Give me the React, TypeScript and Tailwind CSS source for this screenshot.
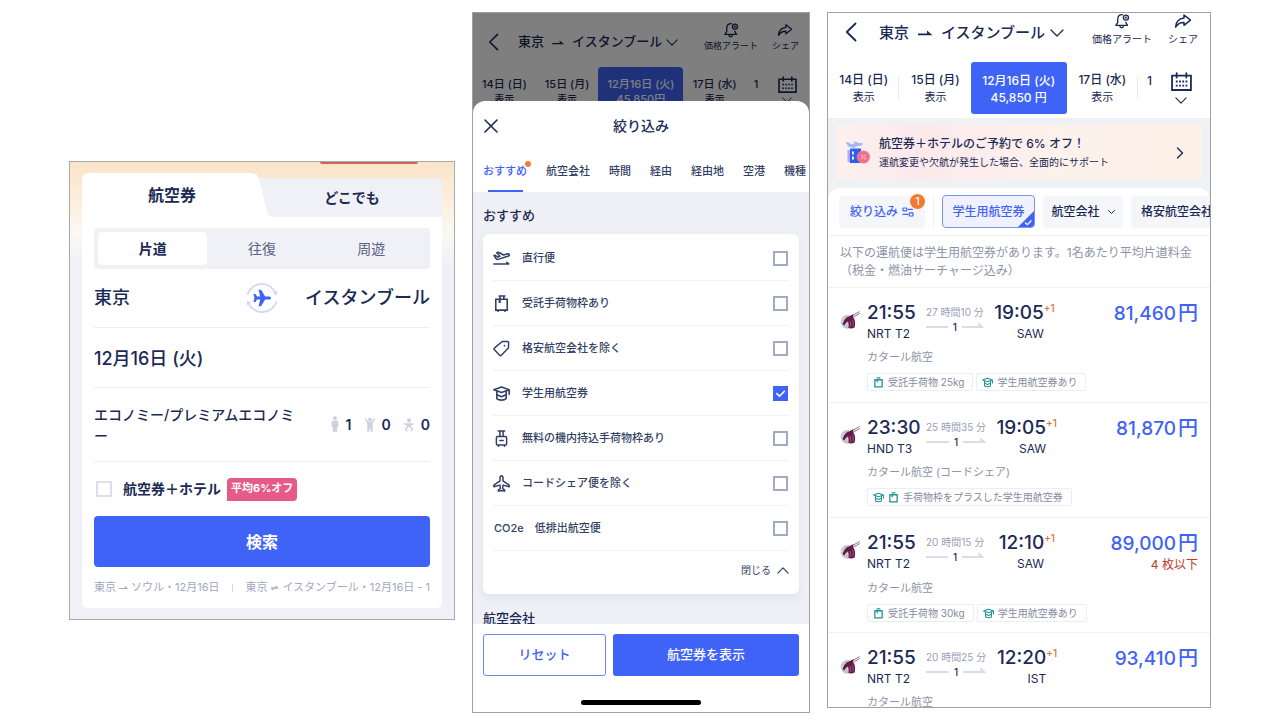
import React, { useState } from "react";

type IconProps = { className?: string };

const stroke = {
  fill: "none",
  stroke: "currentColor",
  strokeLinecap: "round" as const,
  strokeLinejoin: "round" as const,
  "aria-hidden": true,
};

function BackIcon({ className }: IconProps) {
  return (
    <svg viewBox="0 0 12 20" className={className} {...stroke} strokeWidth="1.8">
      <path d="M10.5 1.5 1.8 10l8.7 8.5" />
    </svg>
  );
}

function ChevronDown({ className }: IconProps) {
  return (
    <svg viewBox="0 0 14 8" className={className} {...stroke} strokeWidth="1.3">
      <path d="M1 1l6 6 6-6" />
    </svg>
  );
}

function ChevronUp({ className }: IconProps) {
  return (
    <svg viewBox="0 0 14 8" className={className} {...stroke} strokeWidth="1.4">
      <path d="M1 7l6-6 6 6" />
    </svg>
  );
}

function ChevronRight({ className }: IconProps) {
  return (
    <svg viewBox="0 0 8 12" className={className} {...stroke} strokeWidth="1.4">
      <path d="M1.5 1l5 5-5 5" />
    </svg>
  );
}

function HalfArrow({ className }: IconProps) {
  return (
    <svg viewBox="0 0 14 6" className={className} fill="currentColor" aria-hidden="true">
      <path d="M0 3.600h9V.6l5 4.200v.4H0z" />
    </svg>
  );
}

function RoundTripArrow({ className }: IconProps) {
  return (
    <svg viewBox="0 0 12 8" className={className} fill="currentColor" aria-hidden="true">
      <path d="M1.500 2.600h6V.4L11.500 3.600h-10zM10.500 5.400h-6v2.200L.5 4.400h10z" />
    </svg>
  );
}

function BellIcon({ className }: IconProps) {
  return (
    <svg viewBox="0 0 18 18" className={className} {...stroke} strokeWidth="1.500">
      <path d="M9.400 1.900C6 1.900 4.200 4.100 4.200 7v3.800L2 13.900h13.200l-1.800-3.100V10.200" />
      <path d="M6.500 14.300c.2 1.600 1.100 2.300 2.100 2.300s1.900-.7 2.100-2.300" />
      <circle cx="13.400" cy="5.200" r="2.900" />
      <path d="M13.400 4.200v2M12.400 5.200h2" strokeWidth="1" />
    </svg>
  );
}

function ShareIcon({ className }: IconProps) {
  return (
    <svg viewBox="0 0 18 16" className={className} {...stroke} strokeWidth="1.500">
      <path d="M10 2l6.500 5.200L10 12.300V9.400C6.400 9.200 3.700 10.700 1.600 14c.4-4.700 3.200-8.300 8.400-8.900z" />
    </svg>
  );
}

function CalendarIcon({ className }: IconProps) {
  return (
    <svg viewBox="0 0 20 18" className={className} {...stroke} strokeWidth="1.700" strokeLinejoin="miter">
      <path d="M1 3.400h18v13.700H1zM5.400 1v4.200M14.600 1v4.200" />
      <path d="M4.600 9h1.700M7.700 9h1.700M10.800 9h1.700M13.900 9h1.700M4.600 13h1.700M7.700 13h1.700M10.800 13h1.700M13.900 13h1.700" strokeLinecap="butt" />
    </svg>
  );
}

function CloseIcon({ className }: IconProps) {
  return (
    <svg viewBox="0 0 14 14" className={className} {...stroke} strokeWidth="1.600">
      <path d="M1 1l12 12M13 1L1 13" />
    </svg>
  );
}

function TakeoffIcon({ className }: IconProps) {
  return (
    <svg viewBox="0 0 16 16" className={className} {...stroke} strokeWidth="1.400">
      <path d="M.8 13.200h14M12.800 11.600l2 1.500" />
      <path d="M1 5.200l1.200-.3 2 1.700 2.300-.7-3-3.300 1.500-.5 5 2.600 3-.9c1.100-.3 2.200 0 2.400.6.200.6-.5 1.200-1.500 1.500L4.600 8.800c-.7.2-1.200 0-1.600-.5z" />
    </svg>
  );
}

function SuitcaseIcon({ className }: IconProps) {
  return (
    <svg viewBox="0 0 16 16" className={className} {...stroke} strokeWidth="1.500" strokeLinejoin="miter">
      <path d="M2.600 4h10.800v10.200H2.600zM4.700 14.500v1M11.300 14.500v1M5.800 1h5.400M6.500 1v3M10.200 1v3" />
      <path d="M6.300 4v3.600" strokeWidth="2" strokeLinecap="butt" />
    </svg>
  );
}

function BagTagIcon({ className }: IconProps) {
  return (
    <svg viewBox="0 0 12 12" className={className} {...stroke} strokeWidth="1.400" strokeLinejoin="round">
      <path d="M2 3h8v7.800H2zM4 .9h4M4.600 3v2.800" strokeLinecap="butt" />
    </svg>
  );
}

function TagIcon({ className }: IconProps) {
  return (
    <svg viewBox="0 0 16 16" className={className} {...stroke} strokeWidth="1.400">
      <path d="M8.600 1.400h5.200c.6 0 .9.400.9.900l-.2 5.300-6.900 6.900c-.4.400-.9.400-1.200 0L1.200 9c-.3-.4-.3-.9.100-1.300z" />
      <circle cx="10.800" cy="5.300" r=".8" fill="currentColor" stroke="none" />
    </svg>
  );
}

function StudentIcon({ className }: IconProps) {
  return (
    <svg viewBox="0 0 16 16" className={className} {...stroke} strokeWidth="1.500">
      <path d="M8 1.800L.8 4.400 8 7l7.200-2.600zM15.200 4.400v4.400" />
      <path d="M3.600 6.200v6.600c1 1 2.600 1.400 4.400 1.400s3.400-.4 4.400-1.400V6.200" />
      <path d="M3.800 9.200L8 11l4.200-1.800" />
    </svg>
  );
}

function CarryOnIcon({ className }: IconProps) {
  return (
    <svg viewBox="0 0 16 16" className={className} {...stroke} strokeWidth="1.400">
      <path d="M5 .9h6M6.500 1v5M9.500 1v5" />
      <rect x="3.200" y="6.200" width="9.600" height="8" rx="1" />
      <path d="M6.400 9.900h3.200M5.200 14.600v.8M10.800 14.600v.8" />
    </svg>
  );
}

function PlaneIcon({ className }: IconProps) {
  return (
    <svg viewBox="0 0 16 16" className={className} {...stroke} strokeWidth="1.400">
      <path d="M8 .8c-.9 0-1.400 1-1.400 2v2.800L.8 9.500v1.600l5.800-1.600.3 3.200-1.900 1.500v1L8 14.500l3 .7v-1l-1.900-1.500.3-3.200 5.800 1.600V9.500L9.400 5.600V2.800c0-1-.5-2-1.400-2z" />
    </svg>
  );
}

function FilterIcon({ className }: IconProps) {
  return (
    <svg viewBox="0 0 12 10" className={className} {...stroke} strokeWidth="1.200">
      <rect x="1" y="1" width="3.800" height="2.800" rx=".6" />
      <path d="M6.400 2.400h4M1 7.400h4.600" />
      <rect x="7.200" y="5.800" width="3.800" height="3.200" rx=".6" />
    </svg>
  );
}

function AdultIcon({ className }: IconProps) {
  return (
    <svg viewBox="0 0 10 18" className={className} fill="currentColor" aria-hidden="true">
      <circle cx="5" cy="2.400" r="2.200" />
      <path d="M3 5h4c1 0 1.600.6 1.600 1.500V11c0 .6-.9.800-1.300.3V16c0 1.300-1.900 1.500-2.100.2h-.4C4.600 17.500 2.700 17.300 2.700 16v-4.700c-.4.500-1.300.3-1.300-.3V6.500C1.400 5.600 2 5 3 5z" />
    </svg>
  );
}

function ChildIcon({ className }: IconProps) {
  return (
    <svg viewBox="0 0 12 18" className={className} fill="currentColor" aria-hidden="true">
      <circle cx="6" cy="4" r="2.200" />
      <path d="M1 2.600c.4-.4 1-.2 1.300.3L4 6.400h4l1.700-3.500c.3-.5.900-.7 1.300-.3.300.3.300.7.100 1.100L8.900 8.300V16c0 1.200-2 1.300-2.200.1l-.4-3.300h-.6l-.4 3.300c-.2 1.200-2.200 1.100-2.200-.1V8.300L.9 3.700C.7 3.300.7 2.900 1 2.600z" />
    </svg>
  );
}

function InfantIcon({ className }: IconProps) {
  return (
    <svg viewBox="0 0 12 14" className={className} fill="currentColor" aria-hidden="true">
      <circle cx="6" cy="2.400" r="2.100" />
      <path d="M1.300 5.200c.9-.2 2 .1 3.100.1h3.200c1.100 0 2.200-.3 3.100-.1.800.3.700 1.200 0 1.400l-2.500.7v2H3.800v-2l-2.500-.7c-.7-.2-.8-1.100 0-1.400z" />
      <path d="M4 9.600l-1.600 1.200 1.700 1.900M8 9.600l1.600 1.200-1.700 1.900" fill="none" stroke="currentColor" strokeWidth="1.500" strokeLinecap="round" strokeLinejoin="round" />
    </svg>
  );
}

function SwapIcon({ className }: IconProps) {
  return (
    <svg viewBox="0 0 32 32" className={className} aria-hidden="true">
      <path d="M1.500 12.500A15 15 0 0 1 29.800 11.500M30.500 19.500A15 15 0 0 1 2.200 20.500" fill="none" stroke="#cfd8fc" strokeWidth="1.700" />
      <path d="M31.200 8.500l-.4 5-4.200-2.300zM.8 23.500l.4-5 4.200 2.300z" fill="#cfd8fc" />
      <path
        d="M25 16c0 1-.8 1.600-1.800 1.600h-4L15 24.300h-2.400l1.600-6.700H11l-1.500 2.300H7.500l.9-3.900-.9-3.900h2l1.500 2.300h3.200L12.600 7.700H15l4.200 6.700h4c1 0 1.800.6 1.800 1.600z"
        fill="#3f63f7"
      />
    </svg>
  );
}

function AirlineLogo({ className }: IconProps) {
  return (
    <svg viewBox="0 0 20 18" className={className} aria-hidden="true">
      <circle cx="7.500" cy="10.800" r="6.900" fill="#c1c4ca" />
      <path d="M1.500 8h8M.8 10.500h8M1.300 13h8" stroke="#dfe0e3" strokeWidth=".8" />
      <path d="M19.600.6L9.500 6.200M19.800 2.400l-7.300 4.400" fill="none" stroke="#9c6a83" strokeWidth="1" />
      <path d="M2.600 13.600C3.300 9.800 5.600 6.200 9 5.400l4.500-2.300-.6 3.300c1.600 1.300 2.300 3.400 2.200 6.200l-.3 3.600c-2 1.400-4.300 1.600-6.400.6.500-2.400.4-4.400-.5-6.200C6.300 11.300 5.300 12.600 4.600 14.200z" fill="#641a45" />
      <path d="M9.800 10c.8 1.800.9 3.800.4 6M12.600 8.800c.7 2 .8 4.200.2 6.600" stroke="#b98aa4" strokeWidth=".6" fill="none" />
    </svg>
  );
}

function BannerArt({ className }: IconProps) {
  return (
    <svg viewBox="0 0 26 24" className={className} aria-hidden="true">
      <path d="M5 7.500h11V22H5z" fill="#3558ee" />
      <path d="M2.500 9H5v12.500l-2.500-1z" fill="#9db4f8" />
      <path d="M7 10.500h1.800v3H7zM7 15.500h1.800v3H7z" fill="#fff" />
      <path d="M.8 1.500l2.200-.4 2.800 2L10 2.500 8.300.6 10 .4l4.500 1.800c1.800-.3 3.300 0 3.500.8.100.8-1.200 1.500-3 1.800L11 5.500 7 8.300l-1.500.1 2-2.500-3.500.3z" fill="#a3b9f6" />
      <circle cx="18.500" cy="16" r="6.300" fill="#f0708a" stroke="#f493a6" strokeWidth="1" strokeDasharray="1.800 1" />
      <path d="M16.600 18.200l3.900-4.400" stroke="#fbc3cd" strokeWidth="1" />
      <circle cx="16.900" cy="14.600" r=".9" fill="#fbc3cd" />
      <circle cx="20.200" cy="17.500" r=".9" fill="#fbc3cd" />
    </svg>
  );
}

/* ---------- Search panel ---------- */

function SearchPanel() {
  const [bundle, setBundle] = useState(false);
  return (
    <section className="mt-[149px] self-start overflow-hidden border border-[#a9a9a9] bg-[#f0f1f6] bg-[linear-gradient(180deg,#fbe4c8_0px,#fdf0e0_45px,#fbf8f5_70px,#f0f1f6_104px)] pb-[11px]">
      <div className="flex h-[11px] justify-end pr-9">
        <div className="h-[2px] w-[98px] rounded-b-full bg-[#c96a55]" />
      </div>
      <div className="mx-3">
        <div className="flex items-end">
          <button className="h-11 flex-1 rounded-tl-md bg-white pl-3 text-base font-bold">航空券</button>
          <svg viewBox="0 0 24 44" className="h-11 w-6" aria-hidden="true">
            <path d="M6 5h18v39H6z" fill="#f0f1f6" />
            <path d="M0 0c5 0 8 2 9.200 6.500l7.800 32c1 3.800 3 5.500 7 5.500H0z" fill="#fff" />
          </svg>
          <button className="h-[39px] flex-1 rounded-tr-md bg-[#f0f1f6] pr-3 text-sm font-bold">どこでも</button>
        </div>
        <div className="rounded-b-md bg-white px-3 pt-[11px]">
          <div className="flex h-[41px] rounded bg-[#f0f1f6] p-1 text-sm text-[#5a6385]">
            <button className="flex-1 rounded-sm bg-white font-bold text-[#1b2a55]">片道</button>
            <button className="flex-1">往復</button>
            <button className="flex-1">周遊</button>
          </div>
          <div className="flex h-[59px] items-center justify-between border-b border-[#ececf1] text-lg font-medium">
            <button className="flex-1 text-left">東京</button>
            <button aria-label="出発地と到着地を入れ替える">
              <SwapIcon className="size-8" />
            </button>
            <button className="flex-1 text-right">イスタンブール</button>
          </div>
          <button className="flex h-[60px] w-full items-center border-b border-[#ececf1] pt-0.5 text-lg font-medium">
            12月16日 (火)
          </button>
          <div className="flex h-[74px] items-center justify-between border-b border-[#ececf1]">
            <button className="w-[205px] text-left text-sm leading-[21px] font-medium [line-break:anywhere]">
              エコノミー/プレミアムエコノミー
            </button>
            <div className="flex items-center gap-3 text-sm font-semibold">
              <span className="flex items-center gap-1.5">
                <AdultIcon className="h-[17px] w-[10px] text-[#cfd2de]" />1
              </span>
              <span className="flex items-center gap-1.5">
                <ChildIcon className="h-[17px] w-3 text-[#cfd2de]" />0
              </span>
              <span className="flex items-center gap-1.5">
                <InfantIcon className="h-[14px] w-3 text-[#cfd2de]" />0
              </span>
            </div>
          </div>
          <label className="flex h-[54px] items-center pl-0.5 text-sm font-bold">
            <input
              type="checkbox"
              checked={bundle}
              onChange={() => setBundle(!bundle)}
              className="size-4 appearance-none border-2 border-[#dcdfea] bg-white checked:bg-[#3f63f7]"
            />
            <span className="ml-[11px]">航空券＋ホテル</span>
            <span className="ml-1.5 flex h-[23px] items-center rounded rounded-bl-none bg-[#e65a87] px-1 text-[11px] text-white">
              平均6%オフ
            </span>
          </label>
          <button className="h-[51px] w-full rounded bg-[#3f63f7] text-base font-bold text-white">検索</button>
          <div className="flex h-[41px] items-center justify-between text-[11px] whitespace-nowrap text-[#a2a8c0]">
            <a href="#seoul" className="flex items-center gap-[3px]">
              東京 <HalfArrow className="h-[5px] w-[9px]" /> ソウル・12月16日
            </a>
            <span className="h-2 w-px shrink-0 bg-[#d5d8e3]" />
            <a href="#istanbul" className="flex items-center gap-[3px]">
              東京 <RoundTripArrow className="h-2 w-[9px]" /> イスタンブール・12月16日 - 1
            </a>
          </div>
        </div>
      </div>
    </section>
  );
}

/* ---------- Filter panel ---------- */

const filterTabs = ["航空会社", "時間", "経由", "経由地", "空港", "機種"];

const filterOptions: { label: string; Icon?: (p: IconProps) => React.ReactElement; initial?: boolean }[] = [
  { label: "直行便", Icon: TakeoffIcon },
  { label: "受託手荷物枠あり", Icon: SuitcaseIcon },
  { label: "格安航空会社を除く", Icon: TagIcon },
  { label: "学生用航空券", Icon: StudentIcon, initial: true },
  { label: "無料の機内持込手荷物枠あり", Icon: CarryOnIcon },
  { label: "コードシェア便を除く", Icon: PlaneIcon },
  { label: "CO2e　低排出航空便" },
];

function FilterRow({ label, Icon, initial }: (typeof filterOptions)[number]) {
  const [checked, setChecked] = useState(Boolean(initial));
  return (
    <li className="border-b border-[#f1f2f6]">
      <label className="flex h-11 items-center pr-px text-[11px] font-medium text-[#333f64]">
        {Icon && <Icon className="mr-3 size-[17px] shrink-0" />}
        <span className={Icon ? "flex-1" : "flex-1 pl-px"}>{label}</span>
        <span className="relative flex">
          <input
            type="checkbox"
            checked={checked}
            onChange={() => setChecked(!checked)}
            className="size-[15px] appearance-none border-2 border-[#a0aac0] bg-white checked:border-[#3f63f7] checked:bg-[#3f63f7]"
          />
          {checked && (
            <svg viewBox="0 0 15 15" className="pointer-events-none absolute inset-0 text-white" {...stroke} strokeWidth="1.600">
              <path d="M3.800 7.600l2.700 2.600 4.900-4.900" />
            </svg>
          )}
        </span>
      </label>
    </li>
  );
}

function FilterPanel() {
  return (
    <section className="relative overflow-hidden border border-[#a0a0a0] bg-white">
      <header className="flex items-center pt-[9px] pr-[10px] pl-[15px]">
        <BackIcon className="mt-2 h-[18px] w-[11px]" />
        <h2 className="mt-2 ml-[19px] flex flex-1 items-center gap-2 text-[13px] font-medium whitespace-nowrap">
          東京 <HalfArrow className="h-[5px] w-[12px]" /> イスタンブール
          <ChevronDown className="-ml-1 h-[7px] w-3" />
        </h2>
        <span className="flex flex-col items-center text-[9px] leading-4">
          <BellIcon className="size-4" />
          価格アラート
        </span>
        <span className="ml-[14px] flex flex-col items-center text-[9px] leading-4">
          <ShareIcon className="size-4" />
          シェア
        </span>
      </header>
      <div className="mt-[13px] flex text-center text-[11px] leading-[15px] font-medium whitespace-nowrap">
        <span className="flex-1 pt-[10px]">14日 (日)<br /><span className="text-[10px]">表示</span></span>
        <span className="flex-1 pt-[10px]">15日 (月)<br /><span className="text-[10px]">表示</span></span>
        <span className="h-[46px] w-[85px] rounded bg-[#3f63f7] pt-[10px] text-white">12月16日 (火)<br />45,850円</span>
        <span className="flex-1 pt-[10px]">17日 (水)<br /><span className="text-[10px]">表示</span></span>
        <span className="w-5 pt-[10px]">1</span>
        <span className="flex w-[43px] flex-col items-center gap-1 pt-[9px] pr-px">
          <CalendarIcon className="h-[17px] w-[19px]" />
          <ChevronDown className="h-[6px] w-[10px]" />
        </span>
      </div>
      <div className="absolute inset-0 bg-black/50" />
      <div className="absolute inset-x-0 top-[88px] bottom-0 flex flex-col overflow-hidden rounded-t-xl bg-white">
        <div className="flex h-[50px] shrink-0 items-center justify-between px-[11px]">
          <button aria-label="閉じる">
            <CloseIcon className="size-[14px]" />
          </button>
          <h2 className="text-sm font-medium">絞り込み</h2>
          <span className="w-[14px]" />
        </div>
        <nav className="flex h-[41px] shrink-0 gap-[19px] pl-[10px] text-[11px] font-medium whitespace-nowrap text-[#333f64]">
          <button className="relative flex flex-col items-center text-[#3f63f7]">
            <span className="h-[39px] pt-3">おすすめ</span>
            <span className="h-0.5 w-[35px] bg-[#3f63f7]" />
            <span className="absolute top-2.5 -right-1 size-[6px] rounded-full bg-[#f47a30]" />
          </button>
          {filterTabs.map((tab) => (
            <button key={tab} className="flex pt-3">{tab}</button>
          ))}
        </nav>
        <div className="min-h-0 flex-1 overflow-hidden bg-[#eff0f5] px-[10px]">
          <h3 className="flex h-[42px] items-center pt-1.5 text-[13px] font-medium">おすすめ</h3>
          <div className="rounded-md bg-white px-[10px] pt-0.5 shadow-[0_4px_8px_rgba(60,70,110,0.07)]">
            <ul>
              {filterOptions.map((o) => (
                <FilterRow key={o.label} {...o} />
              ))}
            </ul>
            <div className="flex h-[43px] items-start justify-end pt-3">
              <button className="flex items-center gap-1.5 text-[10px] text-[#333f64]">
                閉じる
                <ChevronUp className="h-[7px] w-3" />
              </button>
            </div>
          </div>
          <h3 className="pt-[14px] text-[13px] leading-5 font-medium">航空会社</h3>
        </div>
        <footer className="shrink-0 bg-white px-[10px] pt-[10px] pb-[7px]">
          <div className="flex gap-[7px]">
            <button className="h-[42px] flex-[122] rounded-[3px] border border-[#6f86ef] text-[13px] font-medium text-[#3f63f7]">
              リセット
            </button>
            <button className="h-[42px] flex-[187] rounded-[3px] bg-[#3f63f7] text-[13px] font-medium text-white">
              航空券を表示
            </button>
          </div>
          <div className="mx-auto mt-6 h-[5px] w-[120px] rounded-full bg-black" />
        </footer>
      </div>
    </section>
  );
}

/* ---------- Results panel ---------- */

type Flight = {
  dep: string;
  from: string;
  duration: string;
  arr: string;
  to: string;
  price: string;
  seats?: string;
  airline: string;
  tags: { icons: ("bag" | "student")[]; text: string }[];
};

const flights: Flight[] = [
  {
    dep: "21:55", from: "NRT T2", duration: "27 時間10 分", arr: "19:05", to: "SAW", price: "81,460", airline: "カタール航空",
    tags: [{ icons: ["bag"], text: "受託手荷物 25kg" }, { icons: ["student"], text: "学生用航空券あり" }],
  },
  {
    dep: "23:30", from: "HND T3", duration: "25 時間35 分", arr: "19:05", to: "SAW", price: "81,870", airline: "カタール航空 (コードシェア)",
    tags: [{ icons: ["student", "bag"], text: "手荷物枠をプラスした学生用航空券" }],
  },
  {
    dep: "21:55", from: "NRT T2", duration: "20 時間15 分", arr: "12:10", to: "SAW", price: "89,000", seats: "4 枚以下", airline: "カタール航空",
    tags: [{ icons: ["bag"], text: "受託手荷物 30kg" }, { icons: ["student"], text: "学生用航空券あり" }],
  },
  {
    dep: "21:55", from: "NRT T2", duration: "20 時間25 分", arr: "12:20", to: "IST", price: "93,410", airline: "カタール航空",
    tags: [],
  },
];

function FlightRow({ f }: { f: Flight }) {
  return (
    <li className="flex h-[115px] shrink-0 border-b border-[#f0f1f5] px-3 pt-3">
      <AirlineLogo className="mt-[11px] mr-[7px] h-[18px] w-5 shrink-0" />
      <div className="min-w-0 flex-1">
        <div className="flex pt-px">
          <div className="w-[59px]">
            <p className="text-[19px] leading-6 font-medium">{f.dep}</p>
            <p className="text-xs leading-[18px]">{f.from}</p>
          </div>
          <div className="pt-[3px]">
            <p className="text-[10px] leading-4 whitespace-nowrap text-[#98a0b5]">{f.duration}</p>
            <div className="flex h-[14px] items-center gap-[5px] text-[10px] font-medium">
              <span className="h-0.5 flex-1 bg-[#d9dde9]" />
              1
              <svg viewBox="0 0 24 6" className="mb-1 h-[6px] flex-1 text-[#d9dde9]" preserveAspectRatio="none" fill="currentColor" aria-hidden="true">
                <path d="M0 4h18V0l6 5.500V6H0z" />
              </svg>
            </div>
          </div>
          <div className="w-[60px] text-right">
            <p className="text-[19px] leading-6 font-medium">{f.arr}</p>
            <p className="text-xs leading-[18px]">{f.to}</p>
          </div>
          <span className="text-[10px] leading-[14px] font-medium text-[#dd6f3c]">+1</span>
          <div className="flex-1 text-right whitespace-nowrap">
            <p className="text-xl leading-6 font-medium text-[#3f63f7]">
              <span className="text-[19px]">{f.price}</span>
              <span className="ml-0.5">円</span>
            </p>
            {f.seats && <p className="text-xs leading-[18px] text-[#c23a32]">{f.seats}</p>}
          </div>
        </div>
        <p className="mt-[5px] text-[11px] leading-[18px] text-[#8d94a8]">{f.airline}</p>
        {f.tags.length > 0 && (
          <div className="mt-[7px] flex gap-[3px] text-[10px] leading-4 text-[#848ba2]">
            {f.tags.map((t) => (
              <span key={t.text} className="flex items-center gap-1 rounded-xs border border-[#eceef4] pr-2 pl-[5px] whitespace-nowrap">
                {t.icons.map((i) =>
                  i === "bag" ? (
                    <BagTagIcon key={i} className="size-[11px] text-[#1f9295]" />
                  ) : (
                    <StudentIcon key={i} className="size-[11px] text-[#1f9295]" />
                  ),
                )}
                {t.text}
              </span>
            ))}
          </div>
        )}
      </div>
    </li>
  );
}

function DateCell({ date, divider = true }: { date: string; divider?: boolean }) {
  return (
    <button className="flex flex-1 items-center">
      <span className="flex-1 pt-px pl-px text-center text-xs leading-[17px] font-medium">
        {date}
        <br />
        <span className="text-[11px] font-normal">表示</span>
      </span>
      {divider && <span className="h-6 w-px bg-[#e9ebf0]" />}
    </button>
  );
}

function ResultsPanel() {
  return (
    <section className="mb-[5px] flex flex-col overflow-hidden border border-[#a0a0a0] bg-white">
      <header className="flex shrink-0 items-start pr-3 pl-[17px]">
        <button className="mt-[9px]" aria-label="戻る">
          <BackIcon className="h-5 w-3" />
        </button>
        <h2 className="mt-2 ml-[22px] flex flex-1 items-center gap-[9px] text-[15px] leading-6 font-medium whitespace-nowrap">
          東京 <HalfArrow className="h-[6px] w-[14px]" /> イスタンブール
          <ChevronDown className="-ml-1 h-2 w-[14px]" />
        </h2>
        <button className="flex flex-col items-center text-[10px] leading-5">
          <BellIcon className="h-4 w-[18px]" />
          価格アラート
        </button>
        <button className="ml-4 flex flex-col items-center text-[10px] leading-5">
          <ShareIcon className="h-4 w-[18px]" />
          シェア
        </button>
      </header>
      <div className="mt-[13px] flex h-[52px] shrink-0 whitespace-nowrap">
        <DateCell date="14日 (日)" />
        <DateCell date="15日 (月)" divider={false} />
        <button className="w-24 rounded-[3px] bg-[#3f63f7] pt-px text-xs leading-[17px] font-medium text-white">
          12月16日 (火)
          <br />
          45,850 円
        </button>
        <DateCell date="17日 (水)" />
        <span className="w-[15px] pt-[10px] pl-[9px] text-xs leading-[17px] font-medium">1</span>
        <button className="flex w-[57px] flex-col items-center justify-center gap-1.5" aria-label="カレンダー">
          <CalendarIcon className="h-[19px] w-[21px]" />
          <ChevronDown className="h-[7px] w-3" />
        </button>
      </div>
      <div className="mt-1 shrink-0 bg-[#eff1f5] pt-[7px]">
        <a
          href="#bundle"
          className="mx-2 flex h-[54px] items-center rounded-md bg-[linear-gradient(90deg,#fdf1ee_0%,#fbe9ec_22%,#fdf2ec_60%,#fdf0e6_100%)] pt-px pr-[18px] pl-[9px]"
        >
          <BannerArt className="h-6 w-[26px]" />
          <span className="ml-2 flex-1">
            <span className="block text-xs leading-[18px] font-medium">航空券＋ホテルのご予約で 6% オフ！</span>
            <span className="block text-[10px] leading-[18px]">運航変更や欠航が発生した場合、全面的にサポート</span>
          </span>
          <ChevronRight className="h-3 w-2" />
        </a>
        <div className="mt-[9px] flex h-12 items-center overflow-hidden rounded-t-xl border-b border-[#f0f1f5] bg-white pl-[11px] text-xs font-medium whitespace-nowrap">
          <button className="relative flex h-8 w-[86px] shrink-0 items-center justify-center gap-1 rounded bg-[#f4f6fa] text-[#3f63f7]">
            絞り込み
            <FilterIcon className="h-[10px] w-3" />
            <span className="absolute -top-0.5 right-0 flex size-[15px] items-center justify-center rounded-full bg-[#f47a30] text-[10px] leading-none text-white">
              1
            </span>
          </button>
          <span className="mr-2 ml-2 h-8 w-px shrink-0 bg-[#f0f1f5]" />
          <button className="relative flex h-[33px] w-[93px] shrink-0 items-center justify-center overflow-hidden rounded border border-[#7f92ee] bg-[#eff1fe] text-[#3f63f7]">
            学生用航空券
            <svg viewBox="0 0 16 16" className="absolute right-0 bottom-0 size-4" aria-hidden="true">
              <path d="M16 0v16H0z" fill="#3f63f7" />
              <path d="M7 11.500l2.400 2.200 4-4.200" fill="none" stroke="#fff" strokeWidth="1.300" />
            </svg>
          </button>
          <button className="ml-2 flex h-8 w-20 shrink-0 items-center justify-center gap-2 rounded bg-[#f4f6fa]">
            航空会社
            <ChevronDown className="h-1 w-[7px] [stroke-width:2]" />
          </button>
          <button className="ml-2 h-8 shrink-0 rounded-l bg-[#f4f6fa] pl-2.5">格安航空会社</button>
        </div>
      </div>
      <p className="h-[52px] shrink-0 border-b border-[#f0f1f5] px-3 pt-2 text-xs leading-[18px] text-[#8d94a8]">
        以下の運航便は学生用航空券があります。1名あたり平均片道料金
        <br />
        （税金・燃油サーチャージ込み）
      </p>
      <ul className="flex min-h-0 flex-1 flex-col overflow-hidden">
        {flights.map((f, i) => (
          <FlightRow key={i} f={f} />
        ))}
      </ul>
    </section>
  );
}

export default function App() {
  return (
    <main className='grid h-screen min-h-[600px] grid-cols-[386fr_338fr_384fr] gap-[17px] bg-white px-[69px] pt-3 pb-[7px] font-["Inter","Noto_Sans_CJK_JP",sans-serif] text-[#1b2a55]'>
      <SearchPanel />
      <FilterPanel />
      <ResultsPanel />
    </main>
  );
}
